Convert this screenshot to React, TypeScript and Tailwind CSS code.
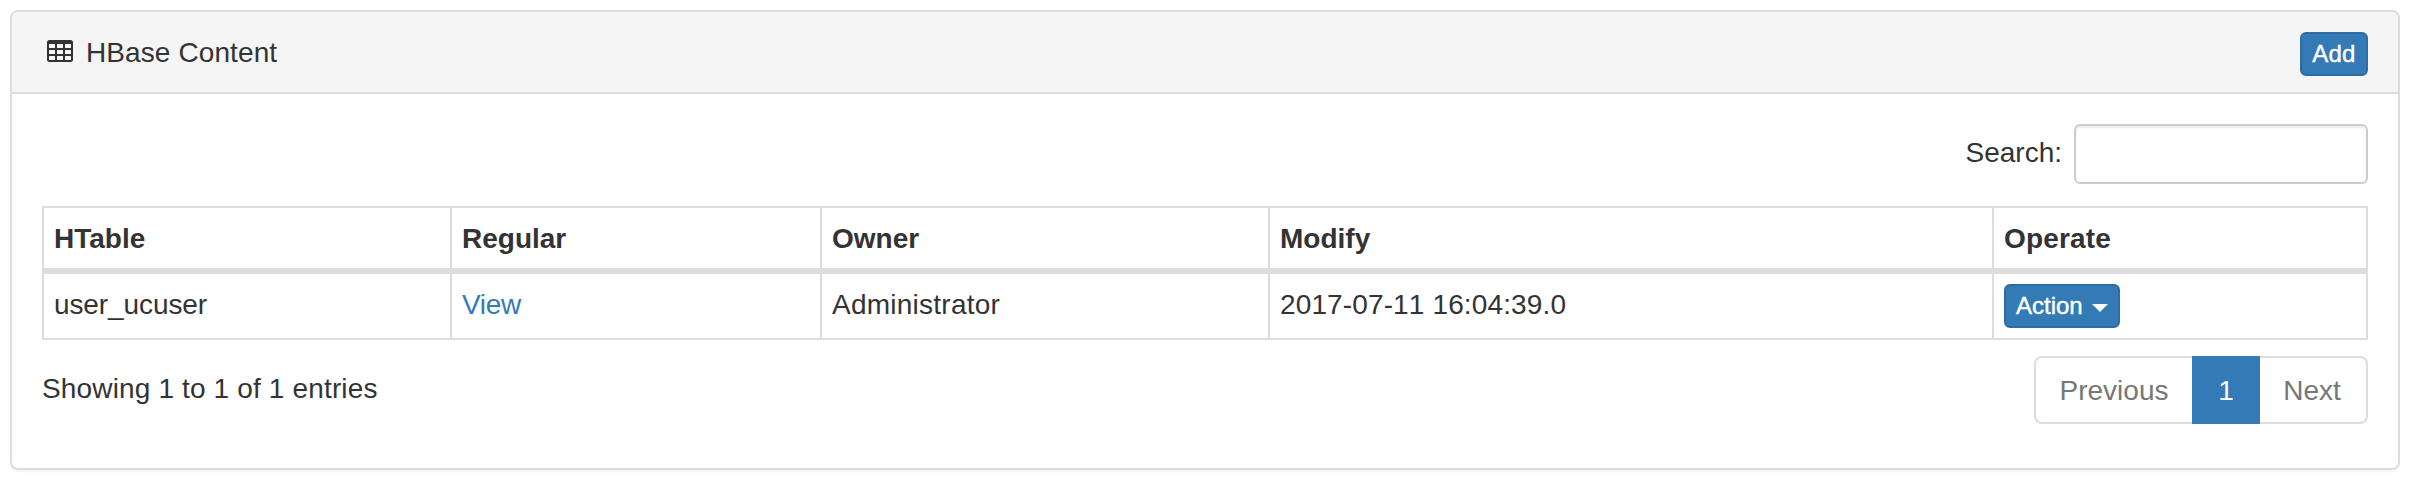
import type { ReactNode } from "react";

const records = [
  {
    table: "user_ucuser",
    owner: "Administrator",
    modified: "2017-07-11 16:04:39.0",
  },
];

function TableIcon() {
  return (
    <svg width="26" height="22" viewBox="0 0 26 22" fill="currentColor" aria-hidden="true">
      <path
        fillRule="evenodd"
        d="M2.5 0h21A2.5 2.5 0 0 1 26 2.5v17a2.5 2.5 0 0 1-2.5 2.5h-21A2.5 2.5 0 0 1 0 19.500v-17A2.5 2.5 0 0 1 2.5 0zM2.500 4h5q.5 0 .5.5v3q0 .5-.5.5h-5q-.5 0-.5-.5v-3q0-.5.5-.5zm8 0h5q.5 0 .5.5v3q0 .5-.5.5h-5q-.5 0-.5-.5v-3q0-.5.5-.5zm8 0h5q.5 0 .5.5v3q0 .5-.5.5h-5q-.5 0-.5-.5v-3q0-.5.5-.5zM2.500 10h5q.5 0 .5.5v3q0 .5-.5.5h-5q-.5 0-.5-.5v-3q0-.5.5-.5zm8 0h5q.5 0 .5.5v3q0 .5-.5.5h-5q-.5 0-.5-.5v-3q0-.5.5-.5zm8 0h5q.5 0 .5.5v3q0 .5-.5.5h-5q-.5 0-.5-.5v-3q0-.5.5-.5zM2.500 16h5q.5 0 .5.5v3q0 .5-.5.5h-5q-.5 0-.5-.5v-3q0-.5.5-.5zm8 0h5q.5 0 .5.5v3q0 .5-.5.5h-5q-.5 0-.5-.5v-3q0-.5.5-.5zm8 0h5q.5 0 .5.5v3q0 .5-.5.5h-5q-.5 0-.5-.5v-3q0-.5.5-.5z"
      />
    </svg>
  );
}

function HeadCell({ children, width }: { children: ReactNode; width: string }) {
  return (
    <div className={`${width} shrink-0 border-r-2 border-[#ddd] pt-2.5 pl-2.5 font-bold last:border-r-0`}>
      {children}
    </div>
  );
}

function Cell({ children, width }: { children: ReactNode; width: string }) {
  return (
    <div className={`${width} shrink-0 border-r-2 border-[#ddd] pt-2.5 pl-2.5 last:border-r-0`}>
      {children}
    </div>
  );
}

export default function App() {
  return (
    <div className="h-[490px] bg-white p-2.5 pr-3 font-['Liberation_Sans',Arial,sans-serif] text-[28px] leading-[42px] text-[#333]">
      <section className="h-[460px] overflow-hidden rounded-lg border-2 border-[#ddd] bg-white shadow-[0_2px_2px_rgba(0,0,0,0.05)]">
        <header className="flex h-[82px] items-start justify-between border-b-2 border-[#ddd] bg-[#f5f5f5] pt-5 pr-[30px] pl-[35px]">
          <h3 className="flex items-start gap-[13px] tracking-[0.1px]">
            <span className="pt-2">
              <TableIcon />
            </span>
            HBase Content
          </h3>
          <button className="h-11 w-[68px] rounded-md border-2 border-[#2e6da4] bg-[#337ab7] text-2xl leading-9 tracking-[0.2px] text-white [-webkit-text-stroke:0.4px]">
            Add
          </button>
        </header>

        <div className="pt-[30px] pr-[30px] pl-[30px]">
          <label className="flex items-start justify-end gap-3">
            <span className="pt-2">Search:</span>
            <input
              type="search"
              className="h-[60px] w-[294px] rounded-md border-2 border-[#ccc] bg-white px-5 shadow-[inset_0_2px_2px_rgba(0,0,0,0.075)] outline-none"
            />
          </label>

          <div className="mt-[22px] border-2 border-[#ddd]">
            <div className="flex h-[66px] border-b-[6px] border-[#ddd]">
              <HeadCell width="w-[408px]">HTable</HeadCell>
              <HeadCell width="w-[370px]">Regular</HeadCell>
              <HeadCell width="w-[448px]">Owner</HeadCell>
              <HeadCell width="w-[724px]">Modify</HeadCell>
              <HeadCell width="w-[372px]">
                <span className="tracking-[0.15px]">Operate</span>
              </HeadCell>
            </div>
            {records.map((record) => (
              <div key={record.table} className="flex h-16">
                <Cell width="w-[408px]">
                  <span className="tracking-[-0.1px]">{record.table}</span>
                </Cell>
                <Cell width="w-[370px]">
                  <a href="#" className="tracking-[-0.3px] text-[#337ab7]">
                    View
                  </a>
                </Cell>
                <Cell width="w-[448px]">
                  <span className="tracking-[0.25px]">{record.owner}</span>
                </Cell>
                <Cell width="w-[724px]">
                  <span className="tracking-[0.13px] [font-kerning:none]">{record.modified}</span>
                </Cell>
                <Cell width="w-[372px]">
                  <button className="flex h-11 w-[116px] items-center rounded-md border-2 border-[#2e6da4] bg-[#337ab7] pl-2.5 text-2xl leading-9 text-white">
                    <span className="w-[76px] text-left [-webkit-text-stroke:0.4px]">Action</span>
                    <svg width="16" height="8" viewBox="0 0 16 8" fill="currentColor" className="mt-1" aria-hidden="true">
                      <path d="M0 0h16L8 8z" />
                    </svg>
                  </button>
                </Cell>
              </div>
            ))}
          </div>

          <div className="flex items-start justify-between pt-4">
            <p className="pt-3 tracking-[0.15px]">Showing 1 to 1 of 1 entries</p>
            <nav className="flex h-[68px] text-center text-[#777]">
              <a className="w-[158px] rounded-l-lg border-2 border-r-0 border-[#ddd] pt-3">Previous</a>
              <a className="w-[68px] bg-[#337ab7] pt-3.5 text-white">1</a>
              <a className="w-[108px] rounded-r-lg border-2 border-l-0 border-[#ddd] pt-3 pr-0.5">Next</a>
            </nav>
          </div>
        </div>
      </section>
    </div>
  );
}
